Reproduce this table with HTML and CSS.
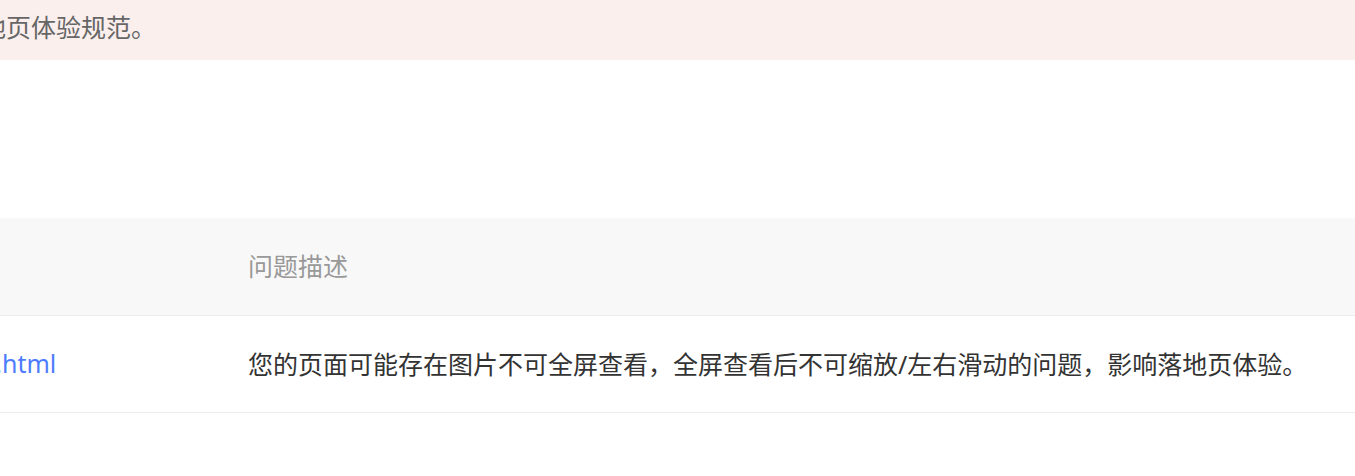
FILE: index.html
```html
<!DOCTYPE html>
<html lang="zh-CN">
<head>
<meta charset="utf-8">
<title>落地页体验</title>
<link rel="stylesheet" href="styles.css">
</head>
<body>
<div class="notice"><span class="notice-text">地页体验规范。</span></div>
<table class="issues">
  <thead>
    <tr>
      <th class="col-url"></th>
      <th class="col-desc">问题描述</th>
    </tr>
  </thead>
  <tbody>
    <tr>
      <td class="col-url"><a class="url" href="#">1.html</a></td>
      <td class="col-desc">您的页面可能存在图片不可全屏查看，全屏查看后不可缩放/左右滑动的问题，影响落地页体验。</td>
    </tr>
  </tbody>
</table>
</body>
</html>
```
FILE: styles.css
```css
html, body {
  margin: 0;
  padding: 0;
  background: #fff;
  overflow: hidden;
}
body {
  font-family: "Noto Sans", "Noto Sans CJK SC", sans-serif;
  font-size: 25px;
  color: #333;
}
.notice {
  height: 60px;
  background: #fbefed;
  display: flex;
  align-items: center;
  padding-bottom: 9px;
  box-sizing: border-box;
  overflow: hidden;
}
.notice-text {
  color: #666;
  margin-left: -19px;
  white-space: nowrap;
}
.issues {
  margin-top: 158px;
  width: 100%;
  border-collapse: collapse;
  table-layout: fixed;
}
.issues th,
.issues td {
  height: 97px;
  padding: 0 0 2px 0;
  box-sizing: border-box;
  text-align: left;
  vertical-align: middle;
  border-bottom: 1px solid #ececec;
  white-space: nowrap;
  overflow: visible;
}
.issues th {
  background: #f8f8f8;
  color: #999;
  font-weight: normal;
}
.col-url {
  width: 248px;
}
.url {
  color: #4d7cfe;
  text-decoration: none;
  display: inline-block;
  margin-left: -19px;
}
```
